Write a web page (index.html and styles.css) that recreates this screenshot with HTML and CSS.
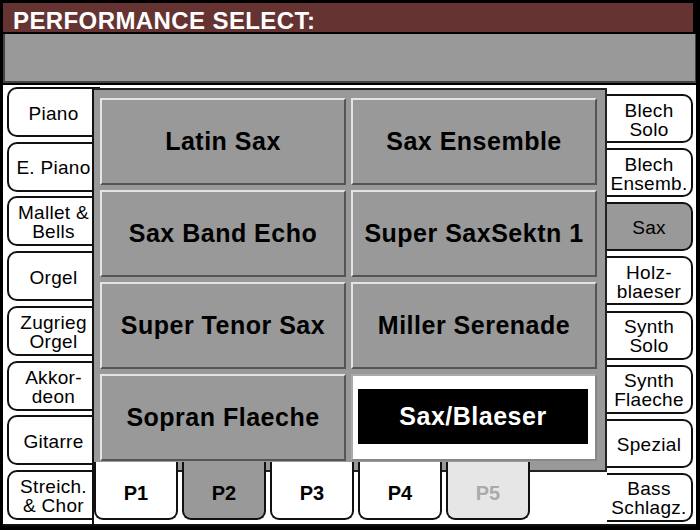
FILE: index.html
```html
<!DOCTYPE html>
<html>
<head>
<meta charset="utf-8">
<link rel="stylesheet" href="styles.css">
</head>
<body>
<div class="screen">
  <div class="title">PERFORMANCE SELECT:</div>
  <div class="bar"></div>
  <div class="main">
    <div class="col left">
      <div class="tab ltab">Piano</div>
      <div class="tab ltab">E. Piano</div>
      <div class="tab ltab">Mallet &amp;<br>Bells</div>
      <div class="tab ltab">Orgel</div>
      <div class="tab ltab">Zugrieg<br>Orgel</div>
      <div class="tab ltab">Akkor-<br>deon</div>
      <div class="tab ltab">Gitarre</div>
      <div class="tab ltab">Streich.<br>&amp; Chor</div>
    </div>
    <div class="center">
      <div class="panel">
        <div class="btn">Latin Sax</div>
        <div class="btn">Sax Ensemble</div>
        <div class="btn">Sax Band Echo</div>
        <div class="btn">Super SaxSektn 1</div>
        <div class="btn">Super Tenor Sax</div>
        <div class="btn">Miller Serenade</div>
        <div class="btn">Sopran Flaeche</div>
        <div class="btn sel"><span class="selbox">Sax/Blaeser</span></div>
      </div>
      <div class="ptabs">
        <div class="ptab">P1</div>
        <div class="ptab on">P2</div>
        <div class="ptab">P3</div>
        <div class="ptab">P4</div>
        <div class="ptab dis">P5</div>
      </div>
    </div>
    <div class="col right">
      <div class="tab rtab">Blech<br>Solo</div>
      <div class="tab rtab">Blech<br>Ensemb.</div>
      <div class="tab rtab on">Sax</div>
      <div class="tab rtab">Holz-<br>blaeser</div>
      <div class="tab rtab">Synth<br>Solo</div>
      <div class="tab rtab">Synth<br>Flaeche</div>
      <div class="tab rtab">Spezial</div>
      <div class="tab rtab">Bass<br>Schlagz.</div>
    </div>
  </div>
</div>
</body>
</html>
```
FILE: styles.css
```css
html, body {
  margin: 0;
  padding: 0;
  background: #000;
}
.screen {
  width: 700px;
  height: 530px;
  box-sizing: border-box;
  padding: 3px 4px 4px 3px;
  display: flex;
  flex-direction: column;
  background: #000;
  font-family: "Liberation Sans", Arial, sans-serif;
  overflow: hidden;
}
.title {
  box-sizing: border-box;
  height: 29px;
  margin-right: 3px;
  background: #663333;
  color: #fff;
  font-weight: bold;
  font-size: 24px;
  letter-spacing: 0.4px;
  line-height: 29px;
  padding: 3px 0 0 10px;
}
.bar {
  margin-top: 2px;
  height: 47px;
  background: #999;
  border-left: 2px solid #444;
  border-right: 1px solid #444;
  border-bottom: 2px solid #444;
}
.main {
  margin-top: 2px;
  flex: 1;
  background: #fff;
  display: flex;
  border-bottom: 2px solid #111;
}
.col {
  display: flex;
  flex-direction: column;
  justify-content: space-between;
}
.left {
  margin-left: 4px;
  width: 93px;
  padding: 2px 0 4px;
}
.right {
  margin-left: -2px;
  width: 88px;
  padding: 9px 0 2px;
}
.tab {
  box-sizing: border-box;
  height: 50px;
  border: 2px solid #111;
  background: #fff;
  display: flex;
  align-items: center;
  justify-content: center;
  text-align: center;
  font-size: 19px;
  line-height: 19px;
  color: #000;
  letter-spacing: 0.3px;
  white-space: nowrap;
}
.ltab {
  border-radius: 10px 0 0 10px;
  padding-top: 2px;
}
.rtab {
  height: 49px;
  border-radius: 0 10px 10px 0;
  padding-top: 2px;
}
.rtab.on {
  background: #999;
}
.center {
  position: relative;
  z-index: 1;
  margin-left: -8px;
  margin-top: 3px;
  width: 515px;
  box-sizing: border-box;
  background: #fff;
  border-left: 2px solid #111;
  display: flex;
  flex-direction: column;
}
.panel {
  box-sizing: border-box;
  height: 384px;
  background: #999;
  border: 2px solid #222;
  border-left: none;
  padding: 8px 8px 9px 6px;
  display: grid;
  grid-template-columns: 1fr 1fr;
  grid-template-rows: repeat(4, 87px);
  gap: 5px 5px;
}
.btn {
  box-sizing: border-box;
  background: #999;
  border-top: 2px solid #e4e4e4;
  border-left: 2px solid #e4e4e4;
  border-right: 2px solid #555;
  border-bottom: 2px solid #555;
  display: flex;
  align-items: center;
  justify-content: center;
  font-size: 25px;
  font-weight: bold;
  letter-spacing: 0.5px;
  color: #000;
  white-space: nowrap;
}
.btn.sel {
  background: #fff;
  border: 2px solid #888;
  border-top-color: #aaa;
  border-left-color: #aaa;
  justify-content: flex-start;
  padding-left: 5px;
  padding-bottom: 2px;
}
.selbox {
  width: 230px;
  height: 55px;
  background: #000;
  color: #fff;
  display: flex;
  align-items: center;
  justify-content: center;
}
.ptabs {
  position: relative;
  margin-top: -10px;
  display: flex;
  gap: 4px;
}
.ptab {
  box-sizing: border-box;
  width: 84px;
  height: 58px;
  border: 2px solid #111;
  border-top: none;
  border-radius: 0 0 9px 9px;
  background: #fff;
  display: flex;
  align-items: center;
  justify-content: center;
  padding-top: 6px;
  font-size: 20px;
  font-weight: bold;
  color: #000;
}
.ptab.on {
  background: #999;
}
.ptab.dis {
  background: #e6e6e6;
  color: #aaa;
}
```
